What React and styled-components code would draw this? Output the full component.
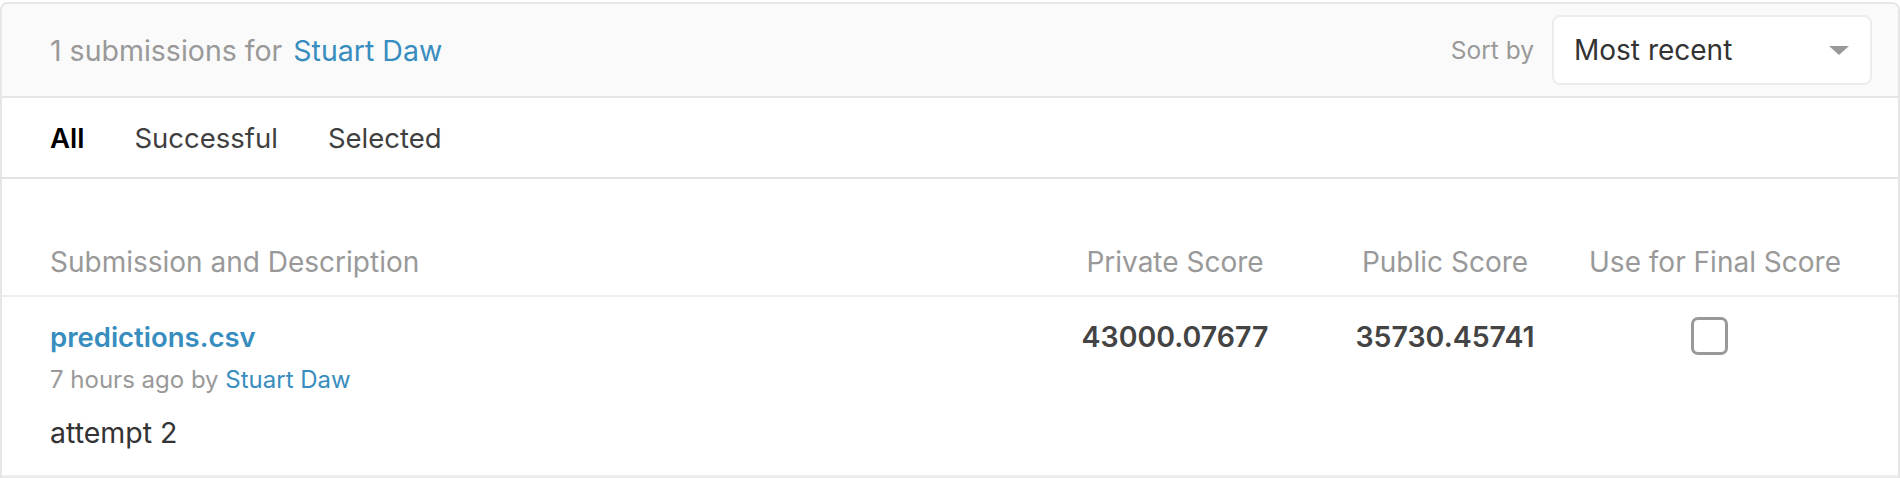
import styled, { createGlobalStyle } from 'styled-components';

const GlobalStyle = createGlobalStyle`
  html, body {
    margin: 0;
    padding: 0;
    background: #fff;
    font-family: 'Inter', 'Noto Sans', sans-serif;
  }
`;

const Page = styled.div`
  padding-top: 2px;
`;

const Card = styled.div`
  border: 2px solid #e6e6e6;
  border-radius: 8px 8px 0 0;
  background: #fff;
`;

const Header = styled.div`
  display: flex;
  align-items: center;
  justify-content: space-between;
  height: 92px;
  padding: 0 26px 0 48px;
  background: #fafafa;
  border-bottom: 2px solid #e6e6e6;
  border-radius: 6px 6px 0 0;
`;

const Title = styled.div`
  font-size: 28.5px;
  color: #999;
  display: flex;
  gap: 11px;
`;

const Link = styled.a`
  color: #388dbf;
  text-decoration: none;
  font-weight: ${(p) => (p.$bold ? 600 : 400)};
`;

const SortWrap = styled.div`
  display: flex;
  align-items: center;
  gap: 18px;
`;

const SortLabel = styled.span`
  font-size: 24.5px;
  color: #999;
`;

const Select = styled.div`
  box-sizing: border-box;
  width: 320px;
  height: 70px;
  display: flex;
  align-items: center;
  justify-content: space-between;
  padding: 0 21px 0 20px;
  background: #fff;
  border: 2px solid #ececec;
  border-radius: 8px;
  font-size: 28px;
  color: #333;
`;

const Caret = styled.span`
  width: 0;
  height: 0;
  border-left: 10px solid transparent;
  border-right: 10px solid transparent;
  border-top: 9px solid #999;
`;

const Tabs = styled.div`
  display: flex;
  align-items: center;
  gap: 50px;
  height: 79px;
  padding: 0 48px;
  border-bottom: 2px solid #e3e3e3;
`;

const Tab = styled.span`
  font-size: 27.5px;
  color: ${(p) => (p.$active ? '#000' : '#3f3f3f')};
  font-weight: ${(p) => (p.$active ? 600 : 400)};
`;

const Table = styled.div`
  padding-top: 50px;
`;

const Row = styled.div`
  display: grid;
  grid-template-columns: 1fr 270px 270px 270px;
  padding: 0 48px;
  border-bottom: 2px solid #eeeeee;
`;

const HeadRow = styled(Row)`
  height: 66px;
  align-items: center;
`;

const HeadCell = styled.div`
  font-size: 28px;
  color: #999;
  text-align: ${(p) => (p.$left ? 'left' : 'center')};
`;

const BodyRow = styled(Row)`
  padding-top: 20px;
  padding-bottom: 24px;
  align-items: start;
`;

const Name = styled.div`
  font-size: 27.5px;
  line-height: 40px;
`;

const Meta = styled.div`
  margin-top: 6px;
  font-size: 24px;
  line-height: 34px;
  color: #999;
`;

const Description = styled.div`
  margin-top: 18px;
  font-size: 28.5px;
  line-height: 36px;
  color: #333;
`;

const Score = styled.div`
  font-size: 28.5px;
  line-height: 40px;
  font-weight: 600;
  color: #444;
  text-align: center;
`;

const CheckCell = styled.div`
  display: flex;
  justify-content: center;
  padding-right: 12px;
`;

const Checkbox = styled.span`
  box-sizing: border-box;
  width: 37px;
  height: 38px;
  border: 3px solid #999;
  border-radius: 7px;
`;

export default function App() {
  return (
    <Page>
      <GlobalStyle />
      <Card>
        <Header>
          <Title>
            <span>1 submissions for</span>
            <Link href="#">Stuart Daw</Link>
          </Title>
          <SortWrap>
            <SortLabel>Sort by</SortLabel>
            <Select>
              <span>Most recent</span>
              <Caret />
            </Select>
          </SortWrap>
        </Header>
        <Tabs>
          <Tab $active>All</Tab>
          <Tab>Successful</Tab>
          <Tab>Selected</Tab>
        </Tabs>
        <Table>
          <HeadRow>
            <HeadCell $left>Submission and Description</HeadCell>
            <HeadCell>Private Score</HeadCell>
            <HeadCell>Public Score</HeadCell>
            <HeadCell>Use for Final Score</HeadCell>
          </HeadRow>
          <BodyRow>
            <div>
              <Name>
                <Link href="#" $bold>predictions.csv</Link>
              </Name>
              <Meta>
                7 hours ago by <Link href="#">Stuart Daw</Link>
              </Meta>
              <Description>attempt 2</Description>
            </div>
            <Score>43000.07677</Score>
            <Score>35730.45741</Score>
            <CheckCell>
              <Checkbox />
            </CheckCell>
          </BodyRow>
        </Table>
      </Card>
    </Page>
  );
}
